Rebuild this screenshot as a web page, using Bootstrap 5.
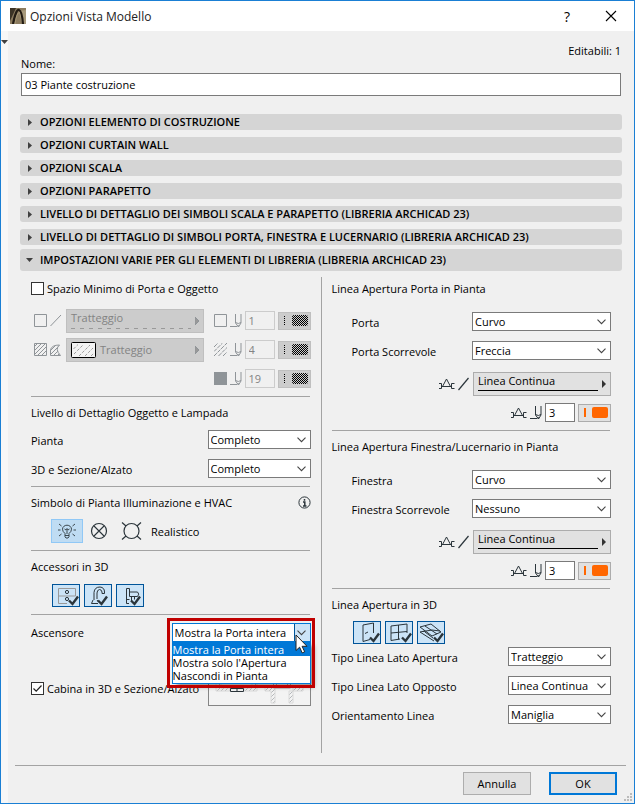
<!DOCTYPE html>
<html lang="it">
<head>
<meta charset="utf-8">
<meta name="viewport" content="width=device-width, initial-scale=1">
<title>Opzioni Vista Modello</title>
<link href="https://cdn.jsdelivr.net/npm/bootstrap@5.3.0/dist/css/bootstrap.min.css" rel="stylesheet">
<style>
:root{--ink:#2b353b;--dim:#8f9498;--line:#a3a3a3;--blue:#0078d7}
body{font:11px/15px "Open Sans","Noto Sans",sans-serif;color:#000;background:#f0f0f0}
svg{display:block;flex:none;fill:none;stroke:var(--ink)}
button,input,select{font:inherit;color:inherit}
.dialog{min-height:100vh;border:1px solid #1a7fd4}
.titlebar{min-height:30px;padding:0 13px 0 9px;font-size:12px;color:#222}
.titlebar button{border:0;background:none;padding:0;width:20px;font-size:14px;color:#000}
.side-strip{width:7px;background:#f7f7f7;padding-top:9px}
.side-strip svg{fill:#404040;stroke:none}
.head-block{padding:13px 1px 0}
.editable{line-height:13px}
.head-block label{line-height:13px}
.name-field{border:1px solid #7a7a7a;border-radius:0;padding:2px 3px;min-height:23px;font-size:11px;line-height:17px;color:#000;margin-top:3px}
.sections{gap:7px;margin-top:18px}
.bar{border:0;border-radius:3px;background:#d5d5d5;min-height:16px;padding:0 8px;gap:8px;font-weight:600;line-height:16px;text-align:left}
.bar svg{fill:#404040;stroke:none}
.bar.open{min-height:22px;margin-top:-3px;padding:0 6px;gap:7px}
.cols{display:grid;grid-template-columns:1fr 1px 1fr;column-gap:10px;padding:0 11px;margin:6px 0 12px}
.vline{background:var(--line)}
.rule{height:1px;background:var(--line);margin:3px 1px 0 0}
.first-title{min-height:22px;margin-bottom:8px}
.first-title.check-title{margin-bottom:7px}
.sub-title{min-height:28px;padding-top:2px}
.sub-title.roomy{margin-bottom:6px}
.opt{min-height:29px}
.opt label,.opt>span{padding-top:2px}
.tall{min-height:32px}
.indent{padding-left:20px}
.indent-tog{padding-left:21px}
.gap-x{gap:3px}
.lead-icon{margin:0 4px 0 3px}
.side-picks{display:flex;flex-direction:column;gap:10px;padding-top:3px}
.side-picks label{padding-top:2px}
.pick{--bs-form-select-bg-img:url("data:image/svg+xml,%3Csvg xmlns='http://www.w3.org/2000/svg' width='9' height='6'%3E%3Cpath d='M.5.7 4.5 4.7 8.5.7' fill='none' stroke='%23444' stroke-width='1.1'/%3E%3C/svg%3E");background-image:var(--bs-form-select-bg-img);border:1px solid #7a7a7a;border-radius:0;padding:1px 14px 0 2px;height:19px;font-size:11px;line-height:16px;color:#000;background-size:9px 6px;background-position:right 4px center}
.w-s{width:103px}.w-l{width:139px}
.tick{appearance:none;width:13px;height:13px;border:1px solid #333;background:#fff;margin:0;flex:none}
.tick:checked{background:#fff url("data:image/svg+xml,%3Csvg xmlns='http://www.w3.org/2000/svg' width='11' height='11'%3E%3Cpath d='M1.5 5.5 4.2 8.2 9.5 2.5' fill='none' stroke='%23222' stroke-width='1.2'/%3E%3C/svg%3E") center no-repeat}
.linebtn{width:138px;height:24px;border:1px solid #acacac;background:#e1e1e1;padding:0 4px;text-align:left;line-height:15px}
.linebtn svg{stroke:none;fill:#333}
.linebtn .stroke-demo{display:block;border-bottom:1px solid #000;height:18px}
.off{border-color:#bfbfbf;background:#ccc;color:#838383}
.off svg{fill:#999}
.off .stroke-demo{border:0;height:19px;background:repeating-linear-gradient(90deg,#999 0 4px,transparent 4px 9px) bottom/100% 1px no-repeat}
.num{width:30px;height:19px;border:1px solid #7a7a7a;border-radius:0;background:#fff;padding:0 3px}
.num:disabled{border-color:#ccc;color:#838383;background:#f0f0f0}
.swatch{width:33px;height:18px;border:1px solid #acacac;background:#e1e1e1;padding:0}
.swatch:disabled{background:#ccc;border-color:#bfbfbf}
.dim svg{stroke:var(--dim)}
.swatch svg,.dim .swatch svg{stroke:none}
.tog{width:28px;height:23px;border:1px solid #005499;background:#cce4f7;padding:0}
.sym{width:32px;height:24px;border:1px solid transparent;background:none;padding:0}
.sym.on{border-color:#90c8f6;background:#bfdcf3}
.lift{min-height:35px}
.cabin{margin-top:20px}
.combo{position:relative;width:139px}
.combo .pick{border-color:var(--blue);width:139px;background-image:var(--bs-form-select-bg-img),linear-gradient(90deg,#005499 1px,#cce4f7 1px);background-size:9px 6px,16px 100%;background-position:right 4px center,right center}
.menu{position:absolute;z-index:2;left:0;right:0;top:18px;border:1px solid var(--blue);background:#fff;box-shadow:4px 4px 4px -1px #0006;line-height:13px;list-style:none;margin:0;padding:0 0 1px}
.menu li:first-child{background:var(--blue);color:#fff;padding-top:1px}
.frame{position:absolute;z-index:3;left:-5px;right:-4px;top:-5px;height:70px;border:3px solid #c00000}
.pointer{position:absolute;z-index:4;left:123px;top:11px}
.preview{width:103px;height:36px;border:1px solid #858585;background:#f3f3f3;padding:0}
.foot{margin:0 8px 0 7px;border-top:1px solid var(--line);padding:6px 9px 8px;gap:18px}
.foot button{width:68px;height:23px;border:1px solid #adadad;background:#e1e1e1;padding:0}
.foot .ok{border:2px solid var(--blue)}
.grip{position:absolute;right:2px;bottom:2px}
</style>
<script src="https://cdn.jsdelivr.net/npm/bootstrap@5.3.0/dist/js/bootstrap.bundle.min.js"></script>
</head>
<body>
<svg width="0" height="0" class="position-absolute">
<defs>
<pattern id="dots" width="2" height="2" patternUnits="userSpaceOnUse"><path d="M0 0h1v1H0zM1 1h1v1H1z" fill="#000" stroke="none" shape-rendering="crispEdges"/></pattern>
<pattern id="hatch" width="4" height="4" patternUnits="userSpaceOnUse"><path d="M-1 5 5-1M-1 1 1-1M3 5 5 3" stroke="#8f9498" stroke-width="1"/></pattern>
<symbol id="pen" viewBox="0 0 12 14"><path d="M0 12.5h7M5.500 0v9l3 4 2.500-4V0M5.500 8.500q3 2 5.500 0M8.200 11v2"/></symbol>
<symbol id="door-sym" viewBox="0 0 16 12"><path d="M0 5.500h2.500v5H0M2.500 8.500h10M3.500 8.500 7.500 1l4 7.500M15.500 5.500h-3v5h3"/></symbol>
<symbol id="slash" viewBox="0 0 12 14"><path d="M.5 13 10.500 1" stroke-width="1.200"/></symbol>
<symbol id="chk" viewBox="0 0 11 11"><path d="M1 5.500 4.500 9 10 1.500" stroke-width="2.400"/></symbol>
</defs>
</svg>

<div class="dialog d-flex flex-column position-relative">
<header class="titlebar bg-white d-flex align-items-center">
<svg width="16" height="16" viewBox="0 0 16 16"><path fill="#8c7c60" stroke="none" d="M0 0h16v16H0z"/><path fill="#3b3326" stroke="none" d="M0 0h6L0 13z"/><path fill="#c4b798" stroke="none" d="M9 3l3 13h4V2z" opacity=".5"/><path d="M3 16Q6 1 9 2t4 14" stroke="#231c14" stroke-width="2.200"/><path d="M5 16Q7 4 9.500 4.500" stroke="#a39473"/></svg>
<span class="ms-1 me-auto">Opzioni Vista Modello</span>
<button type="button" aria-label="Guida" class="me-4">?</button>
<button type="button" aria-label="Chiudi" class="d-flex justify-content-center"><svg width="12" height="12" viewBox="0 0 12 12"><path d="M1 1l10 10M11 1 1 11" stroke="#000" stroke-width="1.100"/></svg></button>
</header>
<div class="d-flex flex-grow-1">
<div class="side-strip"><svg width="7" height="4" viewBox="0 0 7 4"><path d="M0 0h7L3.500 4z"/></svg></div>
<main class="flex-grow-1 d-flex flex-column">
<div class="px-2 flex-grow-1 d-flex flex-column">
<form class="mx-1 flex-grow-1 d-flex flex-column">
<div class="head-block d-flex flex-column">
<div class="editable text-end">Editabili: 1</div>
<label for="nome">Nome:</label>
<input id="nome" class="form-control name-field" value="03 Piante costruzione">
</div>
<div class="sections d-flex flex-column">
<button type="button" class="bar d-flex align-items-center"><svg width="4" height="7" viewBox="0 0 4 7"><path d="M0 0 4 3.500 0 7z"/></svg>OPZIONI ELEMENTO DI COSTRUZIONE</button>
<button type="button" class="bar d-flex align-items-center"><svg width="4" height="7" viewBox="0 0 4 7"><path d="M0 0 4 3.500 0 7z"/></svg>OPZIONI CURTAIN WALL</button>
<button type="button" class="bar d-flex align-items-center"><svg width="4" height="7" viewBox="0 0 4 7"><path d="M0 0 4 3.500 0 7z"/></svg>OPZIONI SCALA</button>
<button type="button" class="bar d-flex align-items-center"><svg width="4" height="7" viewBox="0 0 4 7"><path d="M0 0 4 3.500 0 7z"/></svg>OPZIONI PARAPETTO</button>
<button type="button" class="bar d-flex align-items-center"><svg width="4" height="7" viewBox="0 0 4 7"><path d="M0 0 4 3.500 0 7z"/></svg>LIVELLO DI DETTAGLIO DEI SIMBOLI SCALA E PARAPETTO (LIBRERIA ARCHICAD 23)</button>
<button type="button" class="bar d-flex align-items-center"><svg width="4" height="7" viewBox="0 0 4 7"><path d="M0 0 4 3.500 0 7z"/></svg>LIVELLO DI DETTAGLIO DI SIMBOLI PORTA, FINESTRA E LUCERNARIO (LIBRERIA ARCHICAD 23)</button>
<button type="button" class="bar open d-flex align-items-center"><svg width="7" height="4" viewBox="0 0 7 4"><path d="M0 0h7L3.500 4z"/></svg>IMPOSTAZIONI VARIE PER GLI ELEMENTI DI LIBRERIA (LIBRERIA ARCHICAD 23)</button>
</div>
<div class="cols flex-grow-1">
<section>
<div class="first-title check-title d-flex align-items-center gap-x"><input type="checkbox" class="tick" id="spazio"><label for="spazio">Spazio Minimo di Porta e Oggetto</label></div>
<div class="dim">
<div class="opt d-flex align-items-center">
<svg class="lead-icon" width="28" height="13" viewBox="0 0 28 13"><path d="M.5.500h12v12H.5zM16.500 12 27 1"/></svg>
<button type="button" disabled class="linebtn off d-flex"><span class="flex-grow-1 me-1"><span class="stroke-demo">Tratteggio</span></span><svg class="align-self-center" width="4" height="8" viewBox="0 0 4 8"><path d="M0 0 4 4 0 8z"/></svg></button>
<div class="ms-auto d-flex align-items-center gap-x"><svg width="13" height="13" viewBox="0 0 13 13"><path d="M.5.500h12v12H.5z"/></svg><svg width="12" height="14"><use href="#pen"/></svg><input class="num" disabled value="1" aria-label="Penna linea"><button type="button" disabled class="swatch" aria-label="Colore penna linea"><svg width="31" height="15"><path d="M5 3h1v10H5z" fill="url(#dots)"/><rect x="13" y="2" width="16" height="11" rx="2" fill="url(#dots)"/></svg></button></div>
</div>
<div class="opt d-flex align-items-center">
<svg class="lead-icon" width="28" height="13" viewBox="0 0 28 13"><path d="M.5.500h12v12H.5z" fill="url(#hatch)"/><path d="M16.500 12.500V6.500Q18 2 25.500 2 20.500 6 26.500 12.500z" fill="url(#hatch)"/></svg>
<button type="button" disabled class="linebtn off d-flex align-items-center"><svg width="25" height="16" viewBox="0 0 25 16"><rect x=".5" y=".5" width="24" height="15" rx="1" fill="#f3f3f3" stroke="#000"/><path d="M3 12l9-9M8 14 19 3M14 14l8-8M2.500 7 7 2.500M20 14l3-3" stroke="#888" stroke-width=".8" stroke-dasharray="3 1.500"/></svg><span class="ms-1 flex-grow-1">Tratteggio</span><svg width="4" height="8" viewBox="0 0 4 8"><path d="M0 0 4 4 0 8z"/></svg></button>
<div class="ms-auto d-flex align-items-center gap-x"><svg width="13" height="13" viewBox="0 0 13 13"><path d="M0 4l4-4M0 8.500 8.500 0M0 13 13 0M4.500 13 13 4.500M9 13l4-4" stroke-dasharray="4 1"/></svg><svg width="12" height="14"><use href="#pen"/></svg><input class="num" disabled value="4" aria-label="Penna retino"><button type="button" disabled class="swatch" aria-label="Colore penna retino"><svg width="31" height="15"><path d="M5 3h1v10H5z" fill="url(#dots)"/><rect x="13" y="2" width="16" height="11" rx="2" fill="url(#dots)"/></svg></button></div>
</div>
<div class="opt d-flex align-items-center">
<div class="ms-auto d-flex align-items-center gap-x"><svg width="13" height="13" viewBox="0 0 13 13"><path d="M0 0h13v13H0z" fill="#8f9498" stroke="none"/></svg><svg width="12" height="14"><use href="#pen"/></svg><input class="num" disabled value="19" aria-label="Penna sfondo"><button type="button" disabled class="swatch" aria-label="Colore penna sfondo"><svg width="31" height="15"><path d="M5 3h1v10H5z" fill="url(#dots)"/><rect x="13" y="2" width="16" height="11" rx="2" fill="url(#dots)"/></svg></button></div>
</div>
</div>
<div class="rule"></div>
<div class="sub-title d-flex align-items-center">Livello di Dettaglio Oggetto e Lampada</div>
<div class="opt d-flex align-items-center justify-content-between"><label for="pianta">Pianta</label><select id="pianta" class="form-select pick w-s"><option>Completo</option></select></div>
<div class="opt d-flex align-items-center justify-content-between"><label for="sez">3D e Sezione/Alzato</label><select id="sez" class="form-select pick w-s"><option>Completo</option></select></div>
<div class="rule"></div>
<div class="sub-title d-flex align-items-center justify-content-between">Simbolo di Pianta Illuminazione e HVAC<svg width="13" height="13" viewBox="0 0 13 13"><circle cx="6.500" cy="6.500" r="5.600"/><path d="M6.500 3v1.700M5 6h1.800v4M5 10h3.500" stroke-width="1.500"/></svg></div>
<div class="tall d-flex align-items-center indent">
<button type="button" class="sym on d-flex align-items-center justify-content-center" aria-label="Realistico"><svg width="18" height="16" viewBox="0 0 18 16"><path d="M7 10.500Q4.500 8.500 4.500 6.200a4.500 4 0 0 1 9 0Q13.500 8.500 11 10.500v3.300l-1 1.200H8l-1-1.200zM7 12.500h4M6.500 6l1.500 1 1-1.500 1 1.500 1.500-1M9 7v4M0 7h2.500M15.500 7H18M1 1l2.500 2M17 1l-2.500 2M1 13l2.500-2M17 13l-2.500-2" stroke-width=".9"/></svg></button>
<button type="button" class="sym d-flex align-items-center justify-content-center" aria-label="Simbolo croce"><svg width="18" height="18" viewBox="0 0 18 18"><circle cx="9" cy="9" r="7.500" stroke-width="1.200"/><path d="M4 4l10 10M14 4 4 14" stroke-width="1.100"/></svg></button>
<button type="button" class="sym d-flex align-items-center justify-content-center" aria-label="Simbolo cerchio"><svg width="21" height="18" viewBox="0 0 21 18"><circle cx="10.500" cy="9" r="7.500" stroke-width="1.200"/><path d="M1 .5l4 3.500M20 .5 16 4M1 17.500 5 14M20 17.500 16 14" stroke-width="1.200"/></svg></button>
<span class="ms-1">Realistico</span>
</div>
<div class="rule"></div>
<div class="sub-title d-flex align-items-center">Accessori in 3D</div>
<div class="tall d-flex align-items-center gap-1 indent-tog">
<button type="button" class="tog" aria-label="Mobili"><svg width="26" height="21" viewBox="0 0 26 21"><path d="M14 18.500H5.500v-15h17V11M5.500 11h17" stroke="#999"/><circle cx="14" cy="7" r="1.600"/><circle cx="14" cy="14" r="1.600"/><use href="#chk" x="15" y="10" width="11" height="11"/></svg></button>
<button type="button" class="tog" aria-label="Rubinetti"><svg width="26" height="21" viewBox="0 0 26 21"><path d="M9 15V7.500Q9.500 2 15 2q4.500.5 4.500 5v1.500h-2.500V7Q16.500 4.500 14.500 4.500 12 5 12 8v6M8 15l-1.500 3.500H13M12 15l1.500 2"/><use href="#chk" x="12" y="10" width="11" height="11"/></svg></button>
<button type="button" class="tog" aria-label="Sanitari"><svg width="26" height="21" viewBox="0 0 26 21"><path d="M12 18.500H9.500V3.500h3V7h8q2.500 2 0 4.500h-8V7M14.500 11.500v5M17.500 11.500v3M9.500 14.500h3"/><use href="#chk" x="13" y="10" width="11" height="11"/></svg></button>
</div>
<div class="rule"></div>
<div class="lift d-flex align-items-center justify-content-between"><label for="asc">Ascensore</label>
<div class="combo"><select id="asc" class="form-select pick"><option>Mostra la Porta intera</option><option>Mostra solo l'Apertura</option><option>Nascondi in Pianta</option></select>
<ul class="menu"><li>Mostra la Porta intera</li><li>Mostra solo l'Apertura</li><li>Nascondi in Pianta</li></ul>
<div class="frame"></div>
<svg class="pointer" width="13" height="20" viewBox="0 0 13 20"><path d="M1 1v15.500l3.600-3.300 2.600 5.700 2.500-1.100-2.600-5.500H12z" fill="#fff" stroke="#222"/></svg></div></div>
<div class="cabin d-flex align-items-center justify-content-between"><div class="d-flex align-items-center gap-x text-nowrap"><input type="checkbox" class="tick" id="cab" checked><label for="cab">Cabina in 3D e Sezione/Alzato</label></div>
<button type="button" class="preview" aria-label="Anteprima cabina"><svg width="101" height="34" viewBox="0 0 101 34"><path d="M7 8v12h14v-3h-9V8zM48 8v12H35v-3h8V8zM56 16h10v16h-4V20h-6zM94 16H84v16h-4V20h14z" fill="url(#hatch)" stroke="#ccc" opacity=".6"/><path d="M21.500 17.500h13v3h-13zM28 17v4"/><path d="M64.500 8v9h17V8M67.500 8v9M78.500 8v9" stroke="#aaa"/></svg></button></div>
</section>
<div class="vline"></div>
<section>
<div class="first-title d-flex align-items-center">Linea Apertura Porta in Pianta</div>
<div class="opt d-flex align-items-center justify-content-between"><label for="porta" class="indent">Porta</label><select id="porta" class="form-select pick w-l"><option>Curvo</option></select></div>
<div class="opt d-flex align-items-center justify-content-between"><label for="portas" class="indent">Porta Scorrevole</label><select id="portas" class="form-select pick w-l"><option>Freccia</option></select></div>
<div class="opt d-flex align-items-center justify-content-end mt-1 gap-x"><svg width="16" height="12"><use href="#door-sym"/></svg><svg width="12" height="14"><use href="#slash"/></svg><button type="button" class="linebtn d-flex"><span class="flex-grow-1 me-1"><span class="stroke-demo">Linea Continua</span></span><svg class="align-self-center" width="4" height="8" viewBox="0 0 4 8"><path d="M0 0 4 4 0 8z"/></svg></button></div>
<div class="opt d-flex align-items-center justify-content-end gap-x"><svg width="16" height="12"><use href="#door-sym"/></svg><svg width="12" height="14"><use href="#pen"/></svg><input class="num" value="3" aria-label="Penna porta"><button type="button" class="swatch" aria-label="Colore penna porta"><svg width="31" height="15"><path d="M5 3h2v9H5z" fill="#f60"/><rect x="13" y="2" width="16" height="11" rx="2" fill="#f60"/></svg></button></div>
<div class="rule"></div>
<div class="sub-title roomy d-flex align-items-center">Linea Apertura Finestra/Lucernario in Pianta</div>
<div class="opt d-flex align-items-center justify-content-between"><label for="fin" class="indent">Finestra</label><select id="fin" class="form-select pick w-l"><option>Curvo</option></select></div>
<div class="opt d-flex align-items-center justify-content-between"><label for="fins" class="indent">Finestra Scorrevole</label><select id="fins" class="form-select pick w-l"><option>Nessuno</option></select></div>
<div class="opt d-flex align-items-center justify-content-end mt-1 gap-x"><svg width="16" height="12"><use href="#door-sym"/></svg><svg width="12" height="14"><use href="#slash"/></svg><button type="button" class="linebtn d-flex"><span class="flex-grow-1 me-1"><span class="stroke-demo">Linea Continua</span></span><svg class="align-self-center" width="4" height="8" viewBox="0 0 4 8"><path d="M0 0 4 4 0 8z"/></svg></button></div>
<div class="opt d-flex align-items-center justify-content-end gap-x"><svg width="16" height="12"><use href="#door-sym"/></svg><svg width="12" height="14"><use href="#pen"/></svg><input class="num" value="3" aria-label="Penna finestra"><button type="button" class="swatch" aria-label="Colore penna finestra"><svg width="31" height="15"><path d="M5 3h2v9H5z" fill="#f60"/><rect x="13" y="2" width="16" height="11" rx="2" fill="#f60"/></svg></button></div>
<div class="rule"></div>
<div class="sub-title d-flex align-items-center">Linea Apertura in 3D</div>
<div class="d-flex gap-1 indent-tog pt-1">
<button type="button" class="tog" aria-label="Porte 3D"><svg width="26" height="21" viewBox="0 0 26 21"><path d="M16 17.500 9 19.500V3l10.500-2v10M11 11.500l3-1.500"/><use href="#chk" x="15" y="10" width="11" height="11"/></svg></button>
<button type="button" class="tog" aria-label="Finestre 3D"><svg width="26" height="21" viewBox="0 0 26 21"><path d="M14 17 5 18.500V4l16-2v9M5 11l16-1.500M12.500 3v14.500"/><use href="#chk" x="15" y="10" width="11" height="11"/></svg></button>
<button type="button" class="tog" aria-label="Lucernari 3D"><svg width="26" height="21" viewBox="0 0 26 21"><path d="M2 5l11-3 10 8-9 4zM7 4l12 8M5 9.500 14 8l8 1M2 10l5-1M2 10l14 9M7 10l8 6"/><use href="#chk" x="15" y="10" width="11" height="11"/></svg></button>
</div>
<div class="side-picks">
<div class="d-flex align-items-center justify-content-between"><label for="t1">Tipo Linea Lato Apertura</label><select id="t1" class="form-select pick w-s"><option>Tratteggio</option></select></div>
<div class="d-flex align-items-center justify-content-between"><label for="t2">Tipo Linea Lato Opposto</label><select id="t2" class="form-select pick w-s"><option>Linea Continua</option></select></div>
<div class="d-flex align-items-center justify-content-between"><label for="t3">Orientamento Linea</label><select id="t3" class="form-select pick w-s"><option>Maniglia</option></select></div>
</div>
</section>
</div>
</form>
</div>
<footer class="foot d-flex justify-content-end"><button type="button">Annulla</button><button type="button" class="ok">OK</button></footer>
</main>
</div>
<svg class="grip" width="8" height="8" viewBox="0 0 8 8"><path d="M6 0h2v2H6zM3 3h2v2H3zM6 3h2v2H6zM0 6h2v2H0zM3 6h2v2H3zM6 6h2v2H6z" fill="#bbb" stroke="none"/></svg>
</div>
</body>
</html>
